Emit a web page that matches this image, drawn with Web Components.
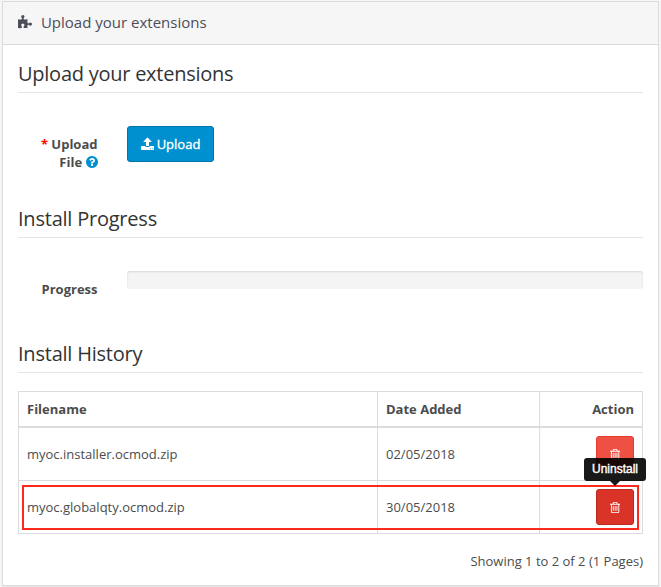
<!DOCTYPE html>
<html lang="en">
<head>
<meta charset="utf-8">
<title>Upload your extensions</title>
<style>
html,body{margin:0;height:100%;background:#f6f6f6}
body{box-sizing:border-box;padding-top:1px;font-family:"Open Sans","Noto Sans",sans-serif;font-size:13px;line-height:18px;color:#4c4c4c;overflow:hidden}
.required{color:#f00}
.help{color:#008fcf}
</style>
</head>
<body>
<extension-panel>
  <form-section caption="Upload your extensions" style="--spacing:-.25px">
    <form-row><span slot="label"><span class="required">* </span>Upload File <fa-icon class="help" name="question" size="14"></fa-icon></span><action-button kind="primary"><fa-icon name="upload" size="14"></fa-icon><span>Upload</span></action-button></form-row>
  </form-section>
  <form-section caption="Install Progress" style="--spacing:-.22px">
    <form-row style="min-height:84px"><span slot="label">Progress</span><progress-track></progress-track></form-row>
  </form-section>
  <form-section caption="Install History" style="--spacing:-.22px">
    <history-table></history-table>
  </form-section>
</extension-panel>
<script>
const define = (name, html) => customElements.define(name, class extends HTMLElement {
  constructor() {
    super();
    this.attachShadow({mode: 'open'}).innerHTML = '<style>:host{box-sizing:border-box}*{box-sizing:border-box}</style>' + html;
  }
});

const icons = {
  puzzle: 'M1728 1098q0 81-44.5 135t-123.5 54q-41 0-77.5-17.5t-59-38-56.5-38-71-17.5q-110 0-110 124 0 39 16 115t15 115v5q-22 0-33 1-34 3-97.5 11.5t-115.5 13.5-98 5q-61 0-103-26.5t-42-83.5q0-37 17.5-71t38-56.5 38-59 17.5-77.5q0-79-54-123.5t-135-44.5q-84 0-143 45.5t-59 127.5q0 43 15 83t33.5 64.5 33.5 53 15 50.5q0 45-46 89-37 35-117 35-95 0-245-24-9-2-27.5-4t-27.5-4l-13-2q-1 0-3-1-2 0-2-1v-1024q2 1 17.5 3.5t34 5 21.5 3.5q150 24 245 24 80 0 117-35 46-44 46-89 0-22-15-50.5t-33.5-53-33.5-64.5-15-83q0-82 59-127.5t144-45.5q80 0 134 44.5t54 123.5q0 41-17.5 77.5t-38 59-38 56.5-17.5 71q0 57 42 83.5t103 26.5q64 0 180-15t163-17v2q-1 2-3.5 17.5t-5 34-3.5 21.5q-24 150-24 245 0 80 35 117 44 46 89 46 22 0 50.5-15t53-33.5 64.5-33.5 83-15q82 0 127.5 59t45.5 143z',
  upload: 'M1344 1472q0-26-19-45t-45-19-45 19-19 45 19 45 45 19 45-19 19-45zm256 0q0-26-19-45t-45-19-45 19-19 45 19 45 45 19 45-19 19-45zm128-224v320q0 40-28 68t-68 28h-1472q-40 0-68-28t-28-68v-320q0-40 28-68t68-28h427q21 56 70.5 92t110.5 36h256q61 0 110.5-36t70.5-92h427q40 0 68 28t28 68zm-325-648q-17 40-59 40h-256v448q0 26-19 45t-45 19h-256q-26 0-45-19t-19-45v-448h-256q-42 0-59-40-17-39 14-69l448-448q18-19 45-19t45 19l448 448q31 30 14 69z',
  question: 'M1024 1376v-192q0-14-9-23t-23-9h-192q-14 0-23 9t-9 23v192q0 14 9 23t23 9h192q14 0 23-9t9-23zm256-672q0-88-55.5-163t-138.5-116-170-41q-243 0-371 213-15 24 8 42l132 100q7 6 19 6 16 0 25-12 53-68 86-92 34-24 86-24 48 0 85.5 26t37.5 59q0 38-20 61t-68 45q-63 28-115.5 86.5t-52.5 125.5v36q0 14 9 23t23 9h192q14 0 23-9t9-23q0-19 21.5-49.5t54.5-49.5q32-18 49-28.5t46-35 44.5-48 28-60.5 12.5-81zm384 192q0 209-103 385.5t-279.5 279.5-385.5 103-385.5-103-279.5-279.5-103-385.5 103-385.5 279.5-279.5 385.5-103 385.5 103 279.5 279.5 103 385.5z',
  trash: 'M704 736v576q0 14-9 23t-23 9h-64q-14 0-23-9t-9-23v-576q0-14 9-23t23-9h64q14 0 23 9t9 23zm256 0v576q0 14-9 23t-23 9h-64q-14 0-23-9t-9-23v-576q0-14 9-23t23-9h64q14 0 23 9t9 23zm256 0v576q0 14-9 23t-23 9h-64q-14 0-23-9t-9-23v-576q0-14 9-23t23-9h64q14 0 23 9t9 23zm128 724v-948h-896v948q0 22 7 40.5t14.5 27 10.5 8.5h832q3 0 10.5-8.5t14.5-27 7-40.5zm-672-1076h448l-48-117q-7-9-17-11h-317q-10 2-17 11zm928 32v64q0 14-9 23t-23 9h-96v948q0 83-47 143.5t-113 60.5h-832q-66 0-113-58.5t-47-141.5v-952h-96q-14 0-23-9t-9-23v-64q0-14 9-23t23-9h309l70-167q15-37 54-63t79-26h320q40 0 79 26t54 63l70 167h309q14 0 23 9t9 23z'
};
const crops = {puzzle: [64, 1664], upload: [64, 1664], question: [128, 1536], trash: [192, 1408]};
customElements.define('fa-icon', class extends HTMLElement {
  connectedCallback() {
    if (this.shadowRoot) return;
    const name = this.getAttribute('name'), size = +this.getAttribute('size');
    const [x, w] = crops[name];
    this.attachShadow({mode: 'open'}).innerHTML = `<style>:host{display:inline-block;vertical-align:-2px;line-height:0}svg{display:block;fill:currentColor}</style>
      <svg width="${size * w / 1792}" height="${size}" viewBox="${x} 0 ${w} 1792"><path d="${icons[name]}"/></svg>`;
  }
});

define('extension-panel', `<style>
  :host{display:flex;flex-direction:column;margin:0 2px;height:585px;width:657px;border:1px solid #dcdcdc;background:#fff;box-shadow:0 1px 1px rgba(0,0,0,.05)}
  header{display:flex;align-items:center;height:43px;flex:none;padding:0 15px 2px;gap:9px;background:#f6f6f6;border-bottom:1px solid #dcdcdc;font-size:15px;color:#4c4d5a}
  main{padding:15px;flex:1}
  footer{text-align:right;padding:0 15px 15px}
</style><header><fa-icon name="puzzle" size="15"></fa-icon><span>Upload your extensions</span></header><main><slot></slot></main><footer>Showing 1 to 2 of 2 (1 Pages)</footer>`);

customElements.define('form-section', class extends HTMLElement {
  connectedCallback() {
    if (this.shadowRoot) return;
    this.attachShadow({mode: 'open'}).innerHTML = `<style>:host{display:block}
      h2{box-sizing:border-box;margin:0 0 18px;height:33px;font-weight:400;font-size:20px;line-height:27px;letter-spacing:var(--spacing);color:#333;border-bottom:1px solid #e5e5e5}
      </style><h2></h2><slot></slot>`;
    this.shadowRoot.querySelector('h2').textContent = this.getAttribute('caption');
  }
});

define('form-row', `<style>
  :host{display:grid;grid-template-columns:79.5px 516px;column-gap:29.5px;padding:15px 0;min-height:94px;align-items:start}
  .label{text-align:right;font-weight:700;padding-top:9px}
</style><div class="label"><slot name="label"></slot></div><div><slot></slot></div>`);

define('progress-track', `<style>:host{display:block;height:18px;border-radius:3px;background:#f4f4f4;box-shadow:inset 0 1px 2px rgba(0,0,0,.12)}</style>`);

define('action-button', `<style>
  :host{display:inline-flex;align-items:center;justify-content:center;gap:3px;width:87px;height:36px;border:1px solid #0075aa;border-radius:3px;background:#008fcf;color:#fff;font-size:13px;-webkit-text-stroke:.35px #fff;white-space:nowrap;vertical-align:top}
  :host([kind=danger]){width:38px;background:#ee5044;border-color:#e8392d}
  :host([kind=active]){width:38px;background:#da3328;border-color:#b6271d}
</style><slot></slot>`);

define('tool-tip', `<style>
  :host{position:absolute;z-index:3;bottom:calc(100% + 8px);left:50%;transform:translateX(-50%);width:62px;height:23px;border-radius:3px;background:rgba(0,0,0,.9);color:#fff;font:12px/22px "Liberation Sans",Arial,sans-serif;text-align:center;-webkit-text-stroke:.4px #fff}
  i{position:absolute;top:100%;left:50%;margin-left:-5px;border:5px solid transparent;border-bottom:0;border-top-color:rgba(0,0,0,.9)}
</style><slot></slot><i></i>`);

define('history-table', `<style>
  :host{display:block;position:relative}
  .table{border:1px solid #dcdcdc;height:143px;width:625px;display:grid;grid-template-columns:358px 161px 102px;grid-template-rows:36px 53px 52px;column-gap:1px;background:linear-gradient(#dcdcdc,#dcdcdc) 358px 0/1px 100% no-repeat,linear-gradient(#dcdcdc,#dcdcdc) 520px 0/1px 100% no-repeat,#fff}
  .table>*{display:flex;align-items:center;padding:0 8px}
  b{border-bottom:2px solid #dcdcdc;margin-right:-1px}
  .a{border-bottom:1px solid #dcdcdc;margin-right:-1px}
  .end{justify-content:flex-end;margin-right:0}
  .wrap{display:inline-block;position:relative;height:36px}
  .mark{position:absolute;z-index:1;left:4px;right:4px;top:94px;height:45px;border:2px solid #fc291c;pointer-events:none}
</style>
<div class="table">
  <b>Filename</b><b>Date Added</b><b class="end">Action</b>
  <div class="a">myoc.installer.ocmod.zip</div><div class="a">02/05/2018</div><div class="a end"><action-button kind="danger"><fa-icon name="trash" size="13"></fa-icon></action-button></div>
  <div>myoc.globalqty.ocmod.zip</div><div>30/05/2018</div><div class="end"><div class="wrap"><action-button kind="active"><fa-icon name="trash" size="13"></fa-icon></action-button><tool-tip>Uninstall</tool-tip></div></div>
</div><div class="mark"></div>`);
</script>
</body>
</html>
